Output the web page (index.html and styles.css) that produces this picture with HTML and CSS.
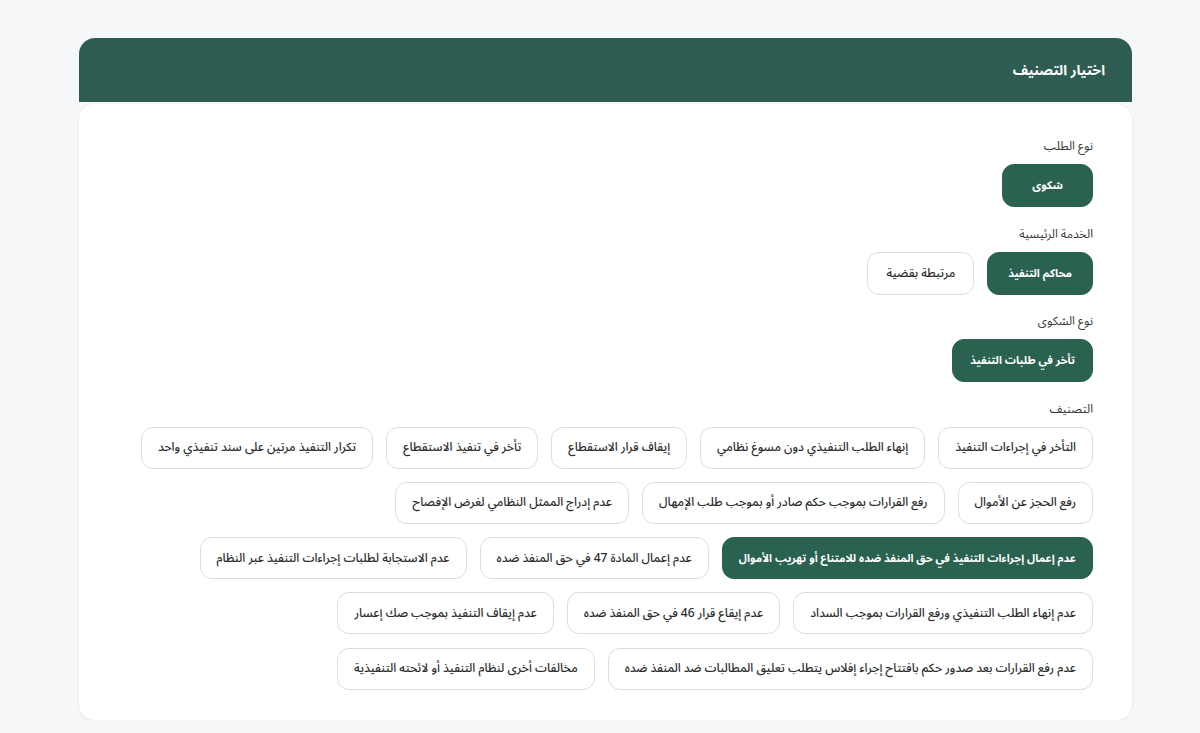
FILE: index.html
```html
<!DOCTYPE html>
<html lang="ar" dir="rtl">
<head>
<meta charset="utf-8">
<title>اختيار التصنيف</title>
<link rel="stylesheet" href="styles.css">
</head>
<body>
<div class="page">
  <section class="panel">
    <header class="panel-head">اختيار التصنيف</header>
    <div class="panel-body">
      <div class="field">
        <div class="label">نوع الطلب</div>
        <div class="options">
          <button class="opt top wide selected">شكوى</button>
        </div>
      </div>
      <div class="field">
        <div class="label">الخدمة الرئيسية</div>
        <div class="options">
          <button class="opt top mid selected">محاكم التنفيذ</button>
          <button class="opt top mid">مرتبطة بقضية</button>
        </div>
      </div>
      <div class="field">
        <div class="label">نوع الشكوى</div>
        <div class="options">
          <button class="opt top selected">تأخر في طلبات التنفيذ</button>
        </div>
      </div>
      <div class="field">
        <div class="label">التصنيف</div>
        <div class="options grid">
          <button class="opt">التأخر في إجراءات التنفيذ</button>
          <button class="opt">إنهاء الطلب التنفيذي دون مسوغ نظامي</button>
          <button class="opt">إيقاف قرار الاستقطاع</button>
          <button class="opt">تأخر في تنفيذ الاستقطاع</button>
          <button class="opt">تكرار التنفيذ مرتين على سند تنفيذي واحد</button>
          <button class="opt">رفع الحجز عن الأموال</button>
          <button class="opt">رفع القرارات بموجب حكم صادر أو بموجب طلب الإمهال</button>
          <button class="opt">عدم إدراج الممثل النظامي لغرض الإفصاح</button>
          <button class="opt selected">عدم إعمال إجراءات التنفيذ في حق المنفذ ضده للامتناع أو تهريب الأموال</button>
          <button class="opt">عدم إعمال المادة 47 في حق المنفذ ضده</button>
          <button class="opt">عدم الاستجابة لطلبات إجراءات التنفيذ عبر النظام</button>
          <button class="opt">عدم إنهاء الطلب التنفيذي ورفع القرارات بموجب السداد</button>
          <button class="opt">عدم إيقاع قرار 46 في حق المنفذ ضده</button>
          <button class="opt">عدم إيقاف التنفيذ بموجب صك إعسار</button>
          <button class="opt">عدم رفع القرارات بعد صدور حكم بافتتاح إجراء إفلاس يتطلب تعليق المطالبات ضد المنفذ ضده</button>
          <button class="opt">مخالفات أخرى لنظام التنفيذ أو لائحته التنفيذية</button>
        </div>
      </div>
    </div>
  </section>
</div>
</body>
</html>
```
FILE: styles.css
```css
* { box-sizing: border-box; }
html, body { margin: 0; padding: 0; }
body {
  background: #f6f7f9;
  font-family: "Noto Sans Arabic", "Noto Sans", "DejaVu Sans", sans-serif;
  color: #2b2b2b;
}
.page {
  padding: 38px 68px 0 79px;
}
.panel {
  width: 1053px;
}
.panel-head {
  background: #2e5c53;
  color: #fff;
  height: 64px;
  border-radius: 16px 16px 0 0;
  padding: 0 27px;
  display: flex;
  align-items: center;
  font-size: 14px;
  font-weight: 700;
}
.panel-body {
  background: #fff;
  border-radius: 16px;
  margin-top: 2px;
  box-shadow: 0 1px 4px rgba(0,0,0,0.06);
  padding: 34px 39px 30px;
  display: flex;
  flex-direction: column;
  gap: 18.5px;
}
.field {
  display: flex;
  flex-direction: column;
  gap: 8px;
}
.label {
  font-size: 12px;
  color: #383838;
  line-height: 18px;
}
.options {
  display: flex;
  flex-wrap: wrap;
  gap: 13px 13px;
}
.options.grid {
  gap: 13.25px 13px;
}
.opt {
  font-family: inherit;
  font-size: 12px;
  font-weight: 500;
  color: #2b2b2b;
  background: #fff;
  border: 1px solid #dcdcdc;
  border-radius: 12px;
  height: 42px;
  padding: 0 16px;
  cursor: pointer;
}
.opt.top { height: 43px; padding: 0 17px; }
.opt.mid { padding: 0 20px; }
.opt.top.mid:not(.selected) { padding: 0 18px; }
.opt.wide { padding: 0 29px; }
.opt.selected {
  background: #2a6150;
  border-color: #2a6150;
  color: #fff;
  font-weight: 700;
  font-size: 11px;
}
```
